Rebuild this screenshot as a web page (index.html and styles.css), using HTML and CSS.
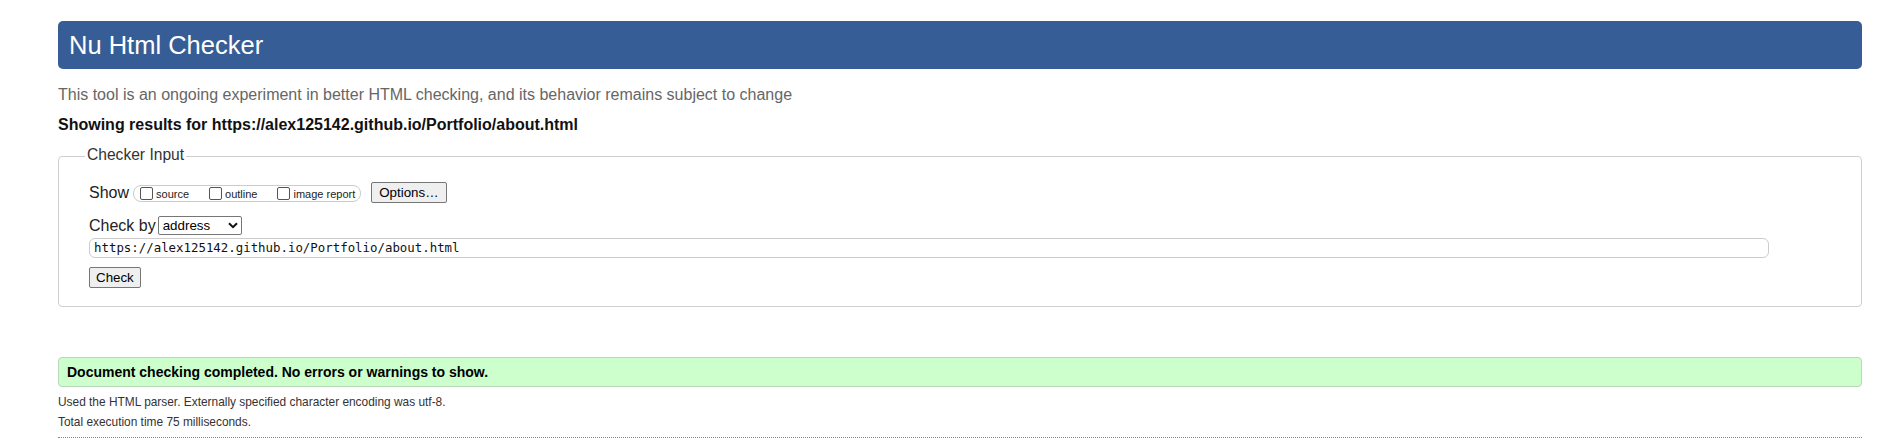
FILE: index.html
```html
<!DOCTYPE html>
<html lang="en">
<head>
<meta charset="utf-8">
<title>Nu Html Checker</title>
<link rel="stylesheet" href="styles.css">
</head>
<body>
<div class="page">
  <h1 class="title">Nu Html Checker</h1>
  <p class="subtitle">This tool is an ongoing experiment in better HTML checking, and its behavior remains subject to change</p>
  <p class="showing">Showing results for https://alex125142.github.io/Portfolio/about.html</p>

  <fieldset class="checker">
    <legend class="checker-legend">Checker Input</legend>
    <div class="row row-show">
      <span class="row-label">Show</span>
      <span class="pill">
        <label class="opt"><span class="cb"></span><span class="opt-text">source</span></label>
        <label class="opt"><span class="cb"></span><span class="opt-text">outline</span></label>
        <label class="opt opt-last"><span class="cb"></span><span class="opt-text">image report</span></label>
      </span>
      <span class="btn btn-options">Options…</span>
    </div>
    <div class="row row-by">
      <span class="row-label">Check by</span>
      <span class="select">
        <span class="select-text">address</span>
        <svg class="chev" width="10" height="7" viewBox="0 0 10 7"><path d="M1 1.2 L5 5.2 L9 1.2" fill="none" stroke="#111" stroke-width="2"/></svg>
      </span>
    </div>
    <div class="url">https://alex125142.github.io/Portfolio/about.html</div>
    <div class="row row-check">
      <span class="btn btn-check">Check</span>
    </div>
  </fieldset>

  <div class="success">Document checking completed. No errors or warnings to show.</div>
  <p class="details details-first">Used the HTML parser. Externally specified character encoding was utf-8.</p>
  <p class="details">Total execution time 75 milliseconds.</p>
  <div class="rule"></div>
</div>
</body>
</html>
```

FILE: styles.css
```css
html, body {
  margin: 0;
  padding: 0;
  background: #ffffff;
}

body {
  font-family: "Liberation Sans", Arial, sans-serif;
  color: #111;
}

.page {
  padding: 21px 16px 0 58px;
}

.title {
  margin: 0;
  height: 48px;
  line-height: 48px;
  padding-left: 11px;
  background: #365d95;
  color: #ffffff;
  font-size: 25.5px;
  font-weight: normal;
  border-radius: 5px;
}

.subtitle {
  margin: 16px 0 0 0;
  font-size: 16px;
  line-height: 20px;
  color: #666;
}

.showing {
  margin: 10px 0 0 0;
  font-size: 16px;
  line-height: 20px;
  font-weight: bold;
  color: #111;
}

.checker {
  margin: 11px 0 0 0;
  padding: 15px 0 18px 30px;
  border: 1px solid #cfcfcf;
  border-radius: 4px;
  min-width: 0;
}

.checker-legend {
  margin-left: -4px;
  padding: 0 2px 3px 2px;
  font-size: 15.6px;
  line-height: 18px;
  color: #333;
}

.row {
  display: flex;
  align-items: center;
}

.row-label {
  font-size: 16px;
  line-height: 20px;
  color: #222;
}

.row-show {
  height: 21px;
}

.pill {
  display: inline-flex;
  align-items: center;
  height: 15px;
  margin-left: 4px;
  padding: 0 5px 0 2px;
  border: 1px solid #cccccc;
  border-radius: 8px;
  margin-top: 2px;
}

.opt {
  display: inline-flex;
  align-items: flex-end;
  margin-right: 16px;
}

.opt-last {
  margin-right: 0;
}

.cb {
  display: inline-block;
  width: 11px;
  height: 11px;
  margin: 0 3px 0 4px;
  border: 1px solid #555;
  border-radius: 2px;
  background: #fff;
}

.opt-text {
  font-size: 11px;
  line-height: 12px;
  color: #222;
}

.btn {
  display: inline-flex;
  align-items: center;
  box-sizing: border-box;
  height: 21px;
  padding: 0 7px;
  border: 1px solid #767676;
  border-radius: 2px;
  background: #efefef;
  font-size: 13.33px;
  color: #000;
}

.btn-options {
  margin-left: 10px;
}

.row-by {
  margin-top: 12px;
  height: 21px;
}

.select {
  display: inline-flex;
  align-items: center;
  justify-content: space-between;
  box-sizing: border-box;
  width: 84px;
  height: 19px;
  margin-left: 2px;
  padding: 0 3px 0 4px;
  border: 1px solid #767676;
  border-radius: 2px;
  background: #fff;
  font-size: 13.33px;
  color: #000;
}

.chev {
  display: block;
}

.url {
  box-sizing: border-box;
  width: 1680px;
  height: 20px;
  margin-top: 2px;
  padding-left: 4px;
  border: 1px solid #cccccc;
  border-radius: 6px;
  font-family: "DejaVu Sans Mono", "Liberation Mono", monospace;
  font-size: 12.4px;
  line-height: 18px;
  color: #111;
}

.row-check {
  margin-top: 9px;
}

.btn-check {
  padding: 0 6px;
}

.success {
  margin-top: 50px;
  box-sizing: border-box;
  height: 30px;
  line-height: 28px;
  padding-left: 8px;
  border: 1px solid #b9d8b9;
  border-radius: 4px;
  background: #ccffcc;
  font-size: 14px;
  font-weight: bold;
  color: #000;
}

.details {
  margin: 0;
  font-size: 11.9px;
  line-height: 20px;
  color: #333;
}

.details-first {
  margin-top: 5px;
}

.rule {
  margin-top: 5px;
  border-top: 1px dotted #888;
}
```
